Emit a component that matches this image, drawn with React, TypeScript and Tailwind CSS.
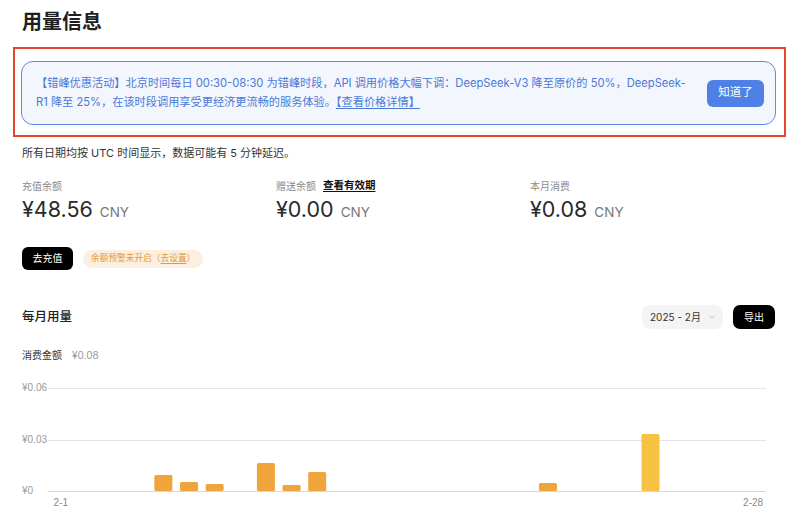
import { ChevronDown } from 'lucide-react';

const bars: { day: number; h: number; color: string }[] = [
  { day: 4, h: 16, color: '#f0a53c' },
  { day: 5, h: 9, color: '#f0a53c' },
  { day: 6, h: 7, color: '#f0a53c' },
  { day: 8, h: 28, color: '#f0a53c' },
  { day: 9, h: 6, color: '#f0a53c' },
  { day: 10, h: 19, color: '#f0a53c' },
  { day: 19, h: 8, color: '#f0a53c' },
  { day: 23, h: 57, color: '#f5c242' },
];

const PLOT_X = 26;
const SLOT = 25.64;

const UsageChart = () => {
  return (
    <svg width="756" height="135" viewBox="0 0 756 135" className="block">
      <g fontFamily="'Liberation Sans', Arial, sans-serif" fontSize="10" fill="#9a9a9a">
        <text x="0" y="8" dominantBaseline="middle">¥0.06</text>
        <text x="0" y="60" dominantBaseline="middle">¥0.03</text>
        <text x="0" y="111" dominantBaseline="middle">¥0</text>
      </g>
      <line x1={PLOT_X} x2="744" y1="8.5" y2="8.5" stroke="#e3e5ea" />
      <line x1={PLOT_X} x2="744" y1="60.5" y2="60.5" stroke="#e3e5ea" />
      <line x1={PLOT_X} x2="744" y1="111.5" y2="111.5" stroke="#d4d6db" />
      {bars.map((b) => (
        <rect
          key={b.day}
          x={PLOT_X + b.day * SLOT + 3.8}
          y={111 - b.h}
          width="18"
          height={b.h}
          rx="1.5"
          fill={b.color}
        />
      ))}
      <g fontFamily="'Liberation Sans', Arial, sans-serif" fontSize="10" fill="#8a8a8a" textAnchor="middle">
        <text x={PLOT_X + SLOT / 2} y="123" dominantBaseline="middle">2-1</text>
        <text x={PLOT_X + 27 * SLOT + SLOT / 2} y="123" dominantBaseline="middle">2-28</text>
      </g>
    </svg>
  );
};

const Stat = ({ label, value, extra }: { label: string; value: string; extra?: string }) => (
  <div className="w-[254px] shrink-0">
    <div className="flex items-center gap-[7px] h-[16px] text-[10px] leading-[16px] text-[#8a8a8a]">
      <span>{label}</span>
      {extra && <span className="text-[10.5px] font-semibold text-[#111] underline underline-offset-2">{extra}</span>}
    </div>
    <div className="mt-[1px] flex items-baseline h-[28px] leading-[28px]">
      <span className="text-[21.5px] text-[#2b2b2b]">{value}</span>
      <span className="ml-[7px] text-[13.5px] text-[#777]">CNY</span>
    </div>
  </div>
);

export default function App() {
  return (
    <div
      className="w-[800px] h-[525px] overflow-hidden bg-white pl-[22px] pr-[25px]"
      style={{ fontFamily: "Inter, 'Noto Sans CJK SC', sans-serif" }}
    >
      <h1 className="mt-[8px] text-[20px] leading-[28px] font-bold text-[#1f1f1f]">用量信息</h1>

      <div className="mt-[11px] -ml-[9px] w-[773px] border-2 border-[#e5452f] pt-[12px] pb-[10px] pl-[6px] pr-[8px]">
        <div className="h-[64px] flex items-center rounded-[12px] border-[1.5px] border-[#5b8ae3] bg-[#f3f6fd] pl-[14px] pr-[11px]">
          <p className="flex-1 text-[11.2px] leading-[19.5px] text-[#4a79d8]">
            【错峰优惠活动】北京时间每日 00:30-08:30 为错峰时段，API 调用价格大幅下调：DeepSeek-V3 降至原价的 50%，DeepSeek-
            <br />
            R1 降至 25%，在该时段调用享受更经济更流畅的服务体验。<a className="underline underline-offset-2">【查看价格详情】</a>
          </p>
          <button className="ml-[12px] h-[27px] w-[57px] rounded-[6px] bg-[#4e80e6] text-[11.5px] text-white">
            知道了
          </button>
        </div>
      </div>

      <p className="mt-[7px] text-[11px] leading-[18px] text-[#333]">所有日期均按 UTC 时间显示，数据可能有 5 分钟延迟。</p>

      <div className="mt-[16px] flex">
        <Stat label="充值余额" value="¥48.56" />
        <Stat label="赠送余额" value="¥0.00" extra="查看有效期" />
        <Stat label="本月消费" value="¥0.08" />
      </div>

      <div className="mt-[24px] flex items-center gap-[10px]">
        <button className="h-[23px] w-[51px] rounded-[6px] bg-black text-[10px] text-white">去充值</button>
        <span className="h-[18px] flex items-center rounded-full bg-[#fcefdf] px-[8px] text-[8.7px] text-[#e39a3b]">
          余额预警未开启（<span className="underline underline-offset-2">去设置</span>）
        </span>
      </div>

      <div className="mt-[35px] flex items-center">
        <h2 className="flex-1 text-[12.5px] font-medium text-[#222]">每月用量</h2>
        <div className="h-[24px] w-[81px] flex items-center justify-between rounded-[8px] bg-[#f4f4f5] pl-[8px] pr-[6px] text-[10px] text-[#333]">
          <span>2025 - 2月</span>
          <ChevronDown className="h-[10px] w-[10px] text-[#999]" strokeWidth={1.5} />
        </div>
        <button className="ml-[10px] h-[24px] w-[42px] rounded-[7px] bg-black text-[10px] text-white">导出</button>
      </div>

      <div className="mt-[18px] flex items-center h-[16px] gap-[10px] text-[10px]">
        <span className="text-[#333]">消费金额</span>
        <span className="text-[#999]">¥0.08</span>
      </div>

      <div className="mt-[17px]">
        <UsageChart />
      </div>
    </div>
  );
}
